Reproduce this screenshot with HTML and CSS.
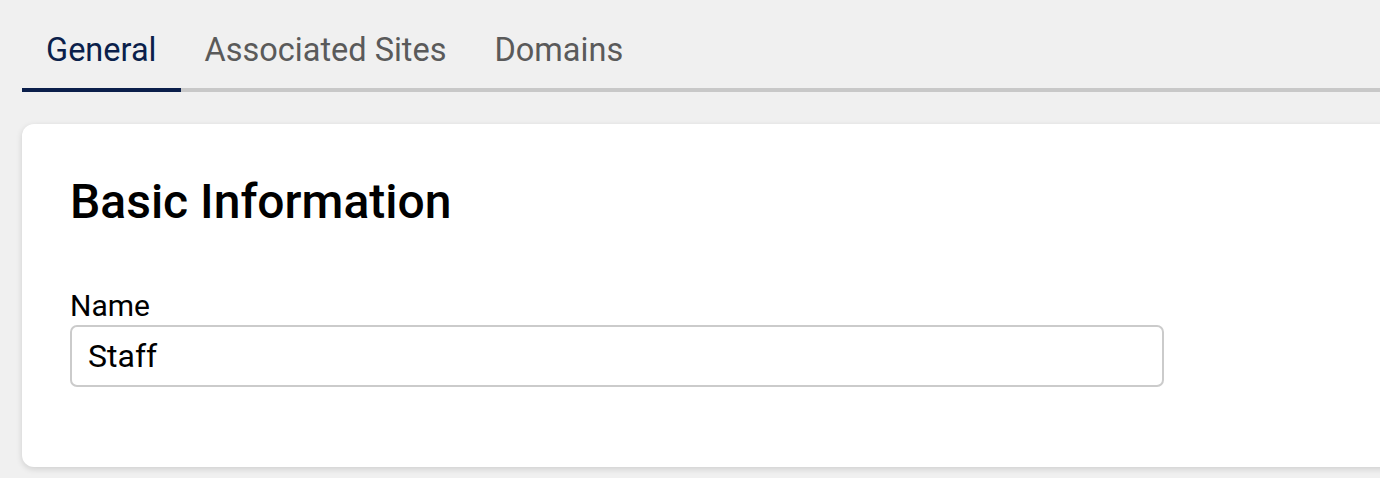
FILE: index.html
```html
<!doctype html>
<html lang="en">
<head>
	<meta charset="UTF-8">
	<title>Group Settings</title>

	<link rel="stylesheet" href="styles.css">

</head>

<body>

	<div id="page">

		<div id="tabBar">
			<div class="tab active">General</div>
			<div class="tab">Associated Sites</div>
			<div class="tab">Domains</div>
		</div>

		<div id="generalPanel" class="card">
			<h2 class="cardTitle">Basic Information</h2>
			<form action="javascript:void(0);" method="get">
				<label class="fieldLabel" for="nameID">Name</label>
				<input type="text" name="name" id="nameID" class="textField" value="Staff">
			</form>
		</div>

	</div>

</body>
</html>
```

FILE: styles.css
```css
html, body {
	margin: 0px;
	padding: 0px;
	background-color: #f0f0f0;
	font-family: Roboto, "Liberation Sans", sans-serif;
}

#page {
	padding-left: 22px;
	overflow: hidden;
	height: 478px;
}

/* tab strip: grey rule runs the full width, the active tab sits on top of it */
#tabBar {
	display: flex;
	border-bottom: 4px solid #c8c8c8;
}
.tab {
	padding: 30px 24px 18px 24px;
	font-size: 32.5px;
	line-height: 40px;
	color: #5a5a5a;
}
.tab.active {
	color: #0b1f4b;
	border-bottom: 4px solid #0b1f4b;
	margin-bottom: -4px;
}

.card {
	margin-top: 32px;
	margin-right: -40px;
	background-color: #ffffff;
	border-radius: 12px;
	box-shadow: 0px 2px 6px rgba(0, 0, 0, 0.14);
	padding: 50px 48px 80px 48px;
}
.cardTitle {
	margin: 0;
	font-size: 48px;
	line-height: 56px;
	font-weight: 500;
	color: #000000;
}

.fieldLabel {
	display: block;
	margin-top: 58px;
	margin-bottom: 1px;
	font-size: 30px;
	line-height: 36px;
	color: #000000;
}
.textField {
	box-sizing: border-box;
	width: 1094px;
	height: 62px;
	padding: 0 16px;
	border: 2px solid #cbcbcb;
	border-radius: 7px;
	font-family: Roboto, "Liberation Sans", sans-serif;
	font-size: 32px;
	color: #000000;
	background-color: #ffffff;
	outline: none;
}
```
